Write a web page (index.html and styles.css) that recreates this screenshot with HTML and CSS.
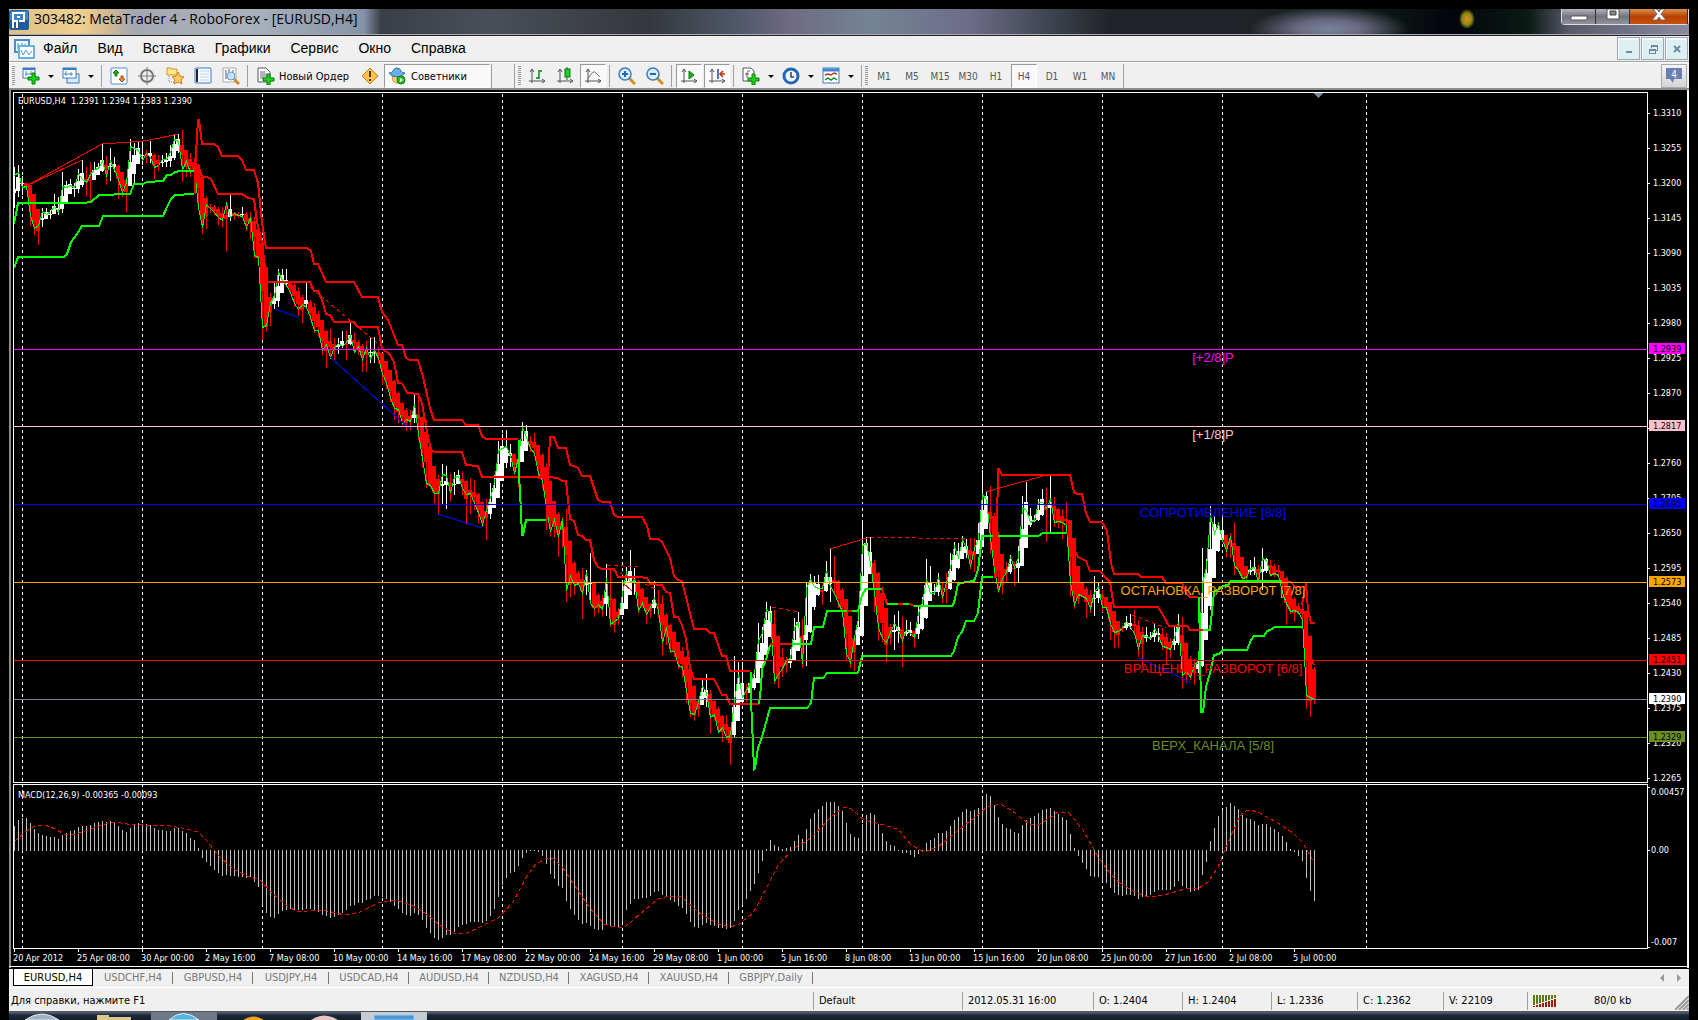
FILE: index.html
```html
<!DOCTYPE html>
<html lang="ru">
<head>
<meta charset="utf-8">
<title>303482: MetaTrader 4 - RoboForex - [EURUSD,H4]</title>
<link rel="stylesheet" href="styles.css">
</head>
<body>
<div class="app">
  <header class="titlebar">
    <svg class="logo" width="20" height="20" viewBox="0 0 20 20"><rect width="20" height="20" rx="2" fill="#1d5f9e"/><rect x="1" y="1" width="18" height="9" fill="#3f86c4"/><path d="M4 18V3h11v8h-5M4 11h4v7M8 7h3" fill="none" stroke="#fff" stroke-width="2"/></svg>
    <h1>303482: MetaTrader 4 - RoboForex - [EURUSD,H4]</h1>
    <div class="caption">
      <button class="cap min" aria-label="Свернуть"><svg width="18" height="14"><rect x="1" y="7" width="16" height="4" rx="1" fill="#fff" stroke="#555"/></svg></button>
      <button class="cap max" aria-label="Развернуть"><svg width="16" height="14"><path d="M2 0h12v10H2z" fill="#fff" stroke="#555"/><path d="M5 2h6v4H5z" fill="#888" stroke="#444"/></svg></button>
      <button class="cap close" aria-label="Закрыть"><svg width="18" height="14"><path d="M2 11L7 5 3 0h4l2 3 2-3h4l-4 5 5 6h-5L9 8l-2 3z" fill="#fff" stroke="#666"/></svg></button>
    </div>
  </header>

  <nav class="menubar">
    <svg class="menu-icon" width="21" height="20" viewBox="0 0 21 20"><rect x="1" y="1" width="14" height="12" fill="#eaf5ff" stroke="#4a90c4" stroke-width="2"/><path d="M4 4v6M8 4v4M11 5v4" stroke="#4a90c4"/><rect x="5" y="7" width="15" height="12" fill="#fff" stroke="#6ab0e0" stroke-width="2"/><path d="M7 11l2 5 3-5 3 5 3-4" fill="none" stroke="#5a98c8"/></svg>
    <button>Файл</button><button>Вид</button><button>Вставка</button><button>Графики</button><button>Сервис</button><button>Окно</button><button>Справка</button>
    <div class="mdi">
      <button aria-label="Свернуть окно"><svg width="12" height="12"><path d="M3 9h6" stroke="#6f8aa0" stroke-width="2"/></svg></button>
      <button aria-label="Восстановить окно"><svg width="12" height="12" shape-rendering="crispEdges"><path d="M4 5V2h6v5H8M4 3h6M2 6h6v4H2zM2 7h6" fill="none" stroke="#6f8aa0"/></svg></button>
      <button aria-label="Закрыть окно"><svg width="12" height="12"><path d="M3 3l6 6M9 3l-6 6" stroke="#6f8aa0" stroke-width="2"/></svg></button>
    </div>
  </nav>

  <div class="toolbar">
    <i class="grip"></i>
    <button class="tb" aria-label="Новый график"><svg viewBox="0 0 18 18"><rect x="1" y="1" width="12" height="10" fill="#fff" stroke="#3a7cc0"/><path d="M1 2h12" stroke="#3a7cc0" stroke-width="2"/><path d="M4 4v5M9 4v4M3 7h8" stroke="#4a88bb"/><path d="M10 6h3v4h4v3h-4v4h-3v-4H6v-3h4z" fill="#1fd21f" stroke="#087a08"/></svg></button>
    <button class="drop" aria-label="Список графиков"></button>
    <button class="tb" aria-label="Профили"><svg viewBox="0 0 18 18"><rect x="5" y="7" width="12" height="9" fill="#d8eaff" stroke="#3a7cc0"/><rect x="1" y="1" width="13" height="10" fill="#fff" stroke="#3a7cc0"/><path d="M1 2h13" stroke="#3a7cc0" stroke-width="2"/><path d="M4 4v5M2 7h9M9 5v4" stroke="#4a88bb"/></svg></button>
    <button class="drop" aria-label="Список профилей"></button>
    <i class="sep before"></i>
    <button class="tb" aria-label="Обзор рынка"><svg viewBox="0 0 18 18"><rect x="1" y="1" width="16" height="16" rx="1" fill="#fff" stroke="#4a94d0"/><path d="M6 3l3 3H7v3H5V6H3z" fill="#1fae1f" stroke="#087a08"/><path d="M12 15l-3-3h2V9h2v3h2z" fill="#f0a040" stroke="#b04010"/></svg></button>
    <button class="tb" aria-label="Окно данных"><svg viewBox="0 0 18 18"><circle cx="9" cy="9" r="6" fill="none" stroke="#777" stroke-width="2"/><path d="M9 0v18M0 9h18" stroke="#777"/></svg></button>
    <button class="tb" aria-label="Навигатор"><svg viewBox="0 0 18 18"><path d="M1 1h4l1 1h5v6H1z" fill="#ffe48a" stroke="#c99a28"/><path d="M3 9v6h5" fill="none" stroke="#888" stroke-dasharray="1 1"/><path d="M12 5l2 4 4 1-3 3 1 4-4-2-4 2 1-4-3-3 4-1z" fill="#ffc860" stroke="#c8801c"/></svg></button>
    <button class="tb" aria-label="Терминал"><svg viewBox="0 0 18 18"><rect x="1" y="1" width="16" height="15" rx="1" fill="#f4faff" stroke="#3a7cc0"/><path d="M3 2v13" stroke="#223" stroke-width="2"/><path d="M6 4h9M6 7h9M6 10h9M6 13h9" stroke="#c4d4e4"/></svg></button>
    <button class="tb" aria-label="Тестер стратегий"><svg viewBox="0 0 18 18"><path d="M1 1h13v14H1z" fill="#fff" stroke="#aaa"/><path d="M4 3v9M7 2v6M11 3v5" stroke="#557"/><circle cx="9" cy="9" r="4" fill="#bfe2ff" stroke="#6a9cc8"/><path d="M12 12l5 5" stroke="#d08a28" stroke-width="3"/></svg></button>
    <i class="sep"></i>
    <button class="order"><svg viewBox="0 0 18 18"><path d="M1 1h8l4 4v10H1z" fill="#fff" stroke="#556"/><path d="M3 5h5M3 7h7M3 9h7M3 11h5" stroke="#667"/><path d="M10 7h3v4h4v3h-4v4h-3v-4H6v-3h4z" fill="#1fd21f" stroke="#087a08"/></svg><span>Новый Ордер</span></button>
    <button class="tb" aria-label="Редактор"><svg viewBox="0 0 18 18"><path d="M9 1l8 8-8 8-8-8z" fill="#ffc24a" stroke="#c0801c"/><path d="M9 4v6M9 12v2" stroke="#5a3200" stroke-width="2"/></svg></button>
    <button class="experts"><svg viewBox="0 0 18 18"><path d="M4 8h10l-1 6q-4 4-8 0z" fill="#f4d27a" stroke="#c79a3a"/><path d="M1 6q3 0 4-2 1-3 4-3t4 3q1 2 4 2-3 4-8 4T1 6z" fill="#6ab0e4" stroke="#2a70b0"/><circle cx="13" cy="13" r="4" fill="#2cc22c" stroke="#087a08"/><path d="M12 11l3 2-3 2z" fill="#fff"/></svg><span>Советники</span></button>
    <i class="sep end"></i>
    <i class="sep gap"></i>
    <i class="grip"></i>
    <button class="tb" aria-label="Бары"><svg viewBox="0 0 18 18"><path d="M4 2v14M1 14h16M2 5l2-3 2 3M14 12l3 2-3 2" fill="none" stroke="#555"/><path d="M8 11h3M11 3v9M11 4h3" fill="none" stroke="#0a8a1a" stroke-width="1.5"/></svg></button>
    <button class="tb" aria-label="Свечи"><svg viewBox="0 0 18 18"><path d="M4 2v14M1 14h16M2 5l2-3 2 3M14 12l3 2-3 2" fill="none" stroke="#555"/><path d="M11 0v13" stroke="#087a08"/><rect x="9" y="2" width="5" height="8" fill="#22cc33" stroke="#087a08"/></svg></button>
    <button class="tb on" aria-label="Линия"><svg viewBox="0 0 18 18"><path d="M4 2v14M1 14h16M2 5l2-3 2 3M14 12l3 2-3 2" fill="none" stroke="#555"/><path d="M4 12Q9 2 12 6l4 4" fill="none" stroke="#4c8a4c"/></svg></button>
    <i class="sep"></i>
    <button class="tb" aria-label="Приблизить"><svg viewBox="0 0 18 18"><path d="M11 11l6 6" stroke="#d8901c" stroke-width="3"/><circle cx="7" cy="7" r="6" fill="#d8efff" stroke="#3a7cc0" stroke-width="1.5"/><path d="M4 7h6M7 4v6" stroke="#2a66aa" stroke-width="2"/></svg></button>
    <button class="tb" aria-label="Отдалить"><svg viewBox="0 0 18 18"><path d="M11 11l6 6" stroke="#d8901c" stroke-width="3"/><circle cx="7" cy="7" r="6" fill="#d8efff" stroke="#3a7cc0" stroke-width="1.5"/><path d="M4 7h6" stroke="#2a66aa" stroke-width="2"/></svg></button>
    <i class="sep"></i>
    <button class="tb on" aria-label="Автопрокрутка"><svg viewBox="0 0 18 18"><path d="M4 2v14M1 14h16M2 5l2-3 2 3M14 12l3 2-3 2" fill="none" stroke="#555"/><path d="M9 4l5 4-5 4z" fill="#1fae2f" stroke="#087a08"/></svg></button>
    <button class="tb on" aria-label="Сдвиг графика"><svg viewBox="0 0 18 18"><path d="M4 2v14M1 14h16M2 5l2-3 2 3M14 12l3 2-3 2" fill="none" stroke="#555"/><path d="M10 2v10" stroke="#1a4aa8" stroke-width="1.5"/><path d="M17 7h-4M15 4l-3 3 3 3" fill="none" stroke="#c03010" stroke-width="1.5"/></svg></button>
    <i class="sep"></i>
    <button class="tb" aria-label="Индикаторы"><svg viewBox="0 0 18 18"><path d="M1 1h8l3 3v10H1z" fill="#fff" stroke="#556"/><path d="M8 4Q5 3 5 7v4M3 7h4" fill="none" stroke="#556"/><path d="M10 7h3v4h4v3h-4v4h-3v-4H6v-3h4z" fill="#1fd21f" stroke="#087a08"/></svg></button>
    <button class="drop" aria-label="Список индикаторов"></button>
    <button class="tb" aria-label="Периоды"><svg viewBox="0 0 18 18"><circle cx="9" cy="9" r="7" fill="#eef6ff" stroke="#2468b4" stroke-width="3"/><path d="M9 5v5h3" fill="none" stroke="#345" stroke-width="1.5"/></svg></button>
    <button class="drop" aria-label="Список периодов"></button>
    <button class="tb" aria-label="Шаблоны"><svg viewBox="0 0 18 18"><rect x="1" y="1" width="16" height="15" fill="#fff" stroke="#3a7cc0"/><path d="M1 3h16" stroke="#3a88d0" stroke-width="3"/><path d="M3 8l3-1 3 1 3-2 3 1" fill="none" stroke="#b03020" stroke-width="1.5"/><path d="M3 13l3-2 3 2 3-2 3 2" fill="none" stroke="#1a8a2a" stroke-width="1.5"/></svg></button>
    <button class="drop" aria-label="Список шаблонов"></button>
    <i class="sep last"></i>
    <i class="grip"></i>
    <button class="tf">M1</button><button class="tf">M5</button><button class="tf">M15</button><button class="tf">M30</button><button class="tf">H1</button><button class="tf on">H4</button><button class="tf">D1</button><button class="tf">W1</button><button class="tf">MN</button>
    <i class="sep end"></i>
    <button class="chat" aria-label="Сообщения: 4"><svg width="18" height="18" viewBox="0 0 18 18"><path d="M1 1h16v11H9l-1 4-3-4H1z" fill="#6a80b4"/><text x="9" y="11" text-anchor="middle">4</text></svg></button>
  </div>

  <main>
    <svg id="chart" class="chart" viewBox="9 90 1680 878" role="img" aria-label="EURUSD,H4"></svg>
  </main>

  <nav class="tabs">
    <button class="active">EURUSD,H4</button><button>USDCHF,H4</button><button>GBPUSD,H4</button><button class="narrow">USDJPY,H4</button><button>USDCAD,H4</button><button>AUDUSD,H4</button><button>NZDUSD,H4</button><button>XAGUSD,H4</button><button>XAUUSD,H4</button><button class="wide">GBPJPY,Daily</button>
    <span class="arrows"><button aria-label="Влево"><svg width="6" height="8"><path d="M5 0v8L1 4z" fill="#999"/></svg></button><button aria-label="Вправо"><svg width="6" height="8"><path d="M1 0v8l4-4z" fill="#999"/></svg></button></span>
  </nav>

  <footer class="status">
    <span class="help">Для справки, нажмите F1</span>
    <span class="s150">Default</span><span class="s131">2012.05.31 16:00</span><span class="s88">O: 1.2404</span><span class="s88">H: 1.2404</span><span class="s86">L: 1.2336</span><span class="s86">C: 1.2362</span><span class="s84">V: 22109</span>
    <span class="net"><svg id="net" width="24" height="12"></svg><b>80/0 kb</b><svg class="size" width="14" height="16"><path d="M0 16L14 2M4 16L14 6M8 16l6-6M12 16l2-2" stroke="#999" stroke-width="2"/></svg></span>
  </footer>
</div>
<footer class="taskbar">
  <svg width="440" height="8"><rect x="142" width="66" height="8" fill="#70798a"/><rect x="352" width="66" height="8" fill="#c6ccd4"/><path d="M16 8q17-12 34 0z" fill="#9fb2c4" stroke="#e4eaf0"/><path d="M88 3h12v2h22v3H88z" fill="#dcc88c"/><path d="M160 8q14-13 30 0z" fill="#55b4e0" stroke="#dff4ff"/><path d="M234 8q10-7 21 0z" fill="#f0a818"/><path d="M302 8q13-9 27 0z" fill="#e8c4c0"/><path d="M365 8V3h40v5z" fill="#4f94d4" stroke="#9cd0ff"/></svg>
</footer>
<script src="script.js"></script>
</body>
</html>
```
FILE: styles.css
```css
* { box-sizing: border-box; }
body {
  margin: 0;
  padding: 9px 9px 0;
  min-height: 100vh;
  background: #000;
  font-family: "DejaVu Sans Condensed", "Noto Sans", sans-serif;
  font-size: 11px;
  overflow: hidden;
}
button {
  font: inherit;
  color: inherit;
  background: none;
  border: 0;
  padding: 0;
  margin: 0;
}
svg { display: block; flex: none; }

.titlebar {
  display: flex;
  height: 27px;
  border-bottom: 1px solid #222;
  box-shadow: inset 0 -1px #a8a8b0;
  background:
    radial-gradient(ellipse 8px 10px at 1458px 10px, #e08a30, #8a8a10 60%, transparent),
    radial-gradient(ellipse 80px 22px at 1320px 20px, #75859a, #6a6880 40%, transparent),
    linear-gradient(90deg, #d9c08c 0, #f0d090 70px, #d0b890 100px, #a4a8b2 125px, #aab2bc 240px, #8494a8 355px, #3a3e46 372px, #4a4e58 480px, #34383c 640px, #50586a 730px, #6e6a82 780px, #748494 860px, #6e6c88 960px, #3e4450 1040px, #202428 1100px, #202428 1230px, #0c1a16 1370px, #04040c 1440px, #0a1a14 1520px, #5a5a6c 1560px, #8a8aa0 1680px);
}
.logo { margin: 1px 5px 0 0; }
h1 {
  margin: 0;
  font: 14px/19px "Open Sans", "Noto Sans", sans-serif;
  color: #000;
  white-space: nowrap;
}
.caption { display: flex; margin-left: auto; height: 16px; border: 1px solid #ddd; border-top: 0; border-radius: 0 0 4px 4px; }
.cap { width: 34px; display: flex; justify-content: center; background: linear-gradient(#b4b4bc, #74747e 50%, #92929c); border-right: 1px solid #333; }
.cap.close { width: 58px; background: linear-gradient(#e09050, #b84000 50%, #c85010); }

.menubar {
  display: flex;
  align-items: center;
  height: 26px;
  padding-left: 5px;
  background: #f0f0f0;
  border-bottom: 1px solid #a0a0a0;
  font: 14px/20px "Liberation Sans", Arial, sans-serif;
  color: #000;
}
.menu-icon { margin-right: -2px; }
.menubar > button { padding: 0 10px 2px; }
.mdi { display: flex; gap: 1px; margin-left: auto; padding-right: 1px; }
.mdi button {
  width: 23px;
  height: 23px;
  display: flex;
  align-items: center;
  justify-content: center;
  border: 1px solid #9aa8b8;
  background: #dcf0f2;
  box-shadow: inset 1px 2px #f6fafc;
}

.toolbar {
  display: flex;
  align-items: center;
  height: 28px;
  padding: 1px 0 0 3px;
  background: #f0f0f0;
  border-top: 1px solid #fff;
  border-bottom: 2px solid #8c8c8c;
}
.grip { width: 3px; height: 20px; margin-right: 2px; background: repeating-linear-gradient(#999 0 1px, #f0f0f0 1px 2px); }
.tb { width: 28px; height: 24px; display: flex; align-items: center; justify-content: center; flex: none; }
.toolbar .tb svg, .order svg, .experts svg { width: 18px; height: 18px; }
.on, .experts {
  border: 1px solid #999;
  border-right-color: #fff;
  border-bottom-color: #fff;
  background: #f9f9f9;
}
.tb.on { width: 26px; margin: 0 1px; }
.drop { width: 12px; height: 24px; display: flex; align-items: center; justify-content: center; flex: none; }
.drop::before { content: ""; border: 3px solid transparent; border-top-color: #000; border-bottom: 0; }
.sep { width: 1px; height: 22px; margin: 0 3px 0 2px; background: #a0a0a0; }
.sep.before { margin-left: 4px; }
.sep.end { height: 25px; margin: 0 1px; }
.sep.gap { height: 25px; margin-left: 21px; margin-right: 3px; }
.sep.last { margin-left: 4px; }
.order { display: flex; align-items: center; gap: 4px; height: 24px; padding: 0 3px 0 6px; width: 105px; white-space: nowrap; }
.experts { display: flex; align-items: center; gap: 5px; width: 106px; height: 24px; padding-left: 3px; }
.tf { width: 28px; height: 24px; color: #555; font-size: 10px; flex: none; }
.tf.on { width: 26px; margin: 0 1px; }
.chat { width: 26px; height: 24px; margin-left: auto; margin-right: 2px; display: flex; align-items: center; justify-content: center; border: 1px solid #aaa; background: linear-gradient(#f4f4f4, #d4d4d4); }
.chat text { fill: #fff; font-size: 10px; }

.chart { width: 100%; height: auto; background: #000; }
.chart text { font-size: 9px; fill: #fff; }
.chart .level { font: 13px "Liberation Sans", Arial, sans-serif; text-anchor: middle; }
.chart .dark { fill: #000; }
.grid { stroke: #fff; stroke-dasharray: 3 3; }
.frame { fill: none; stroke: #fff; }
.trend { fill: none; stroke-width: 2; }
.thin { fill: none; stroke-width: 1; }
.dashed { stroke-dasharray: 4 3; }

.tabs {
  display: flex;
  height: 20px;
  padding-left: 4px;
  background: #f0f0f0;
  border-top: 1px solid #000;
  border-bottom: 1px solid #fff;
  color: #777;
  font-size: 11px;
}
.tabs > button { position: relative; width: 80px; height: 17px; }
.tabs > button::after { content: ""; position: absolute; right: 0; top: 3px; width: 1px; height: 12px; background: #777; }
.tabs > .active { background: #fff; color: #000; border: 1px solid #000; border-top: 0; }
.tabs > .active::after { display: none; }
.tabs > .narrow { width: 76px; }
.tabs > .wide { width: 84px; }
.arrows { display: flex; gap: 11px; margin-left: auto; padding-right: 7px; align-items: center; }

.status {
  display: flex;
  align-items: center;
  height: 24px;
  padding-top: 2px;
  background: #f0f0f0;
  border-bottom: 1px solid #555;
  font-size: 11px;
  color: #000;
  white-space: nowrap;
}
.status > span { height: 18px; line-height: 18px; padding-left: 5px; border-left: 1px solid #a0a0a0; flex: none; }
.status > .help { flex: 1; padding-left: 2px; border: 0; }
.s150 { width: 149px; }
.s131 { width: 131px; }
.s88 { width: 89px; }
.s86 { width: 86px; }
.s84 { width: 84px; }
.status .net { display: flex; align-items: center; width: 162px; }
.net b { font-weight: normal; margin-left: 37px; }
.size { margin-left: auto; align-self: flex-end; }

.taskbar { height: 8px; background: linear-gradient(#5a6878, #1c2a3c 3px, #141c26); overflow: hidden; }
```
FILE: script.js
```js
const chart = document.getElementById('chart');
let out = '';
const add = (s) => { out += s; };
const rect = (x, y, w, h, c) => add(`<rect x="${x}" y="${y}" width="${w}" height="${h}" fill="${c}"/>`);
const barX = (n) => 14 + 4 * n;

// high, low, close of each bar, three units to the pixel, measured down from y0
const ohlc = [
  [0, 100, '202,325,225 196,290,216 228,285,262 255,270,258 255,378,345 285,405,383 340,435,375 323,380,333 325,358,342 330,357,333 282,340,318 292,345,335 215,340,257 243,305,260 237,265,255 250,290,262 207,280,218 181,260,237 202,288,246 186,305,222 186,240,206 190,220,204 130,215,182 168,255,224 143,242,182 170,215,206 196,298,238 220,290,276 240,335,245 117,250,138 130,248,145 125,180,150 135,195,180 150,188,158 123,190,170 160,237,200 165,212,196 165,200,178 160,200,178 135,200,155 103,180,118 103,160,122 90,245,207 150,232,182 160,230,215 175,230,205 193,325,322 232,402,382 288,387,313 312,340,325 315,345,335 320,375,352 320,382,360 305,453,310 283,362,352 335,360,340 337,355,345 320,355,347 335,392,382 337,417,350 350,475,465 378,490,470 420,720,680 530,693,675 580,678,610 550,628,585 507,620,517 507,575,540 507,555,555 545,580,575 545,620,610 562,648,628 585,668,612 548,620,622 600,660,650 610,700,690 632,708,690 660,765,750 690,803,732 687,775,770 715,780,740 713,762,728 692,745,738 692,780,725 668,735,705 700,760,755 720,765,738 732,815,778 722,815,745 713,788,775 710,788,750 740,790,775 760,855,820 795,866,850 810,905,890 840,960,925 872,968,928 905,975,970 925,992,958 930,990,962 885,970,912'],
  [101, 380, '52,180,160 110,262,235 120,325,308 210,320,315 260,368,340 285,402,338 252,372,282 258,388,284 282,365,335 277,345,290 270,312,288 272,345,325 300,430,342 295,402,338 300,390,370 340,430,395 362,442,432 358,480,390 308,417,350 285,385,310 183,310,210 162,290,205 150,265,197 192,260,225 220,285,280 180,322,230 126,245,142 135,212,170 168,215,205 160,230,220 195,298,280 220,325,300 250,450,385 300,472,452 365,470,418 395,530,468 410,503,418 387,665,630 480,650,588 543,645,615 572,615,610 565,718,640 570,645,575 519,670,668 610,710,685 638,700,673 645,712,688 552,708,595 568,742,733 655,758,722 685,735,713 610,705,640 560,660,575 510,630,605 563,645,600 600,700,690 625,680,670 655,732,702 670,715,680 602,702,655 630,715,690 645,825,785 700,795,742 730,818,812 752,832,812 785,866,855 800,895,860 828,968,930 865,1012,1000 915,1022,1003 958,1012,965 897,972,918 882,980,935 930,1062,1012 958,1020,1003 980,1060,1055 1005,1085,1040 1005,1080,1072 1040,1155,1065 828,1070,960 845,1020,882 845,970,952 912,965,930'],
  [184, 460, '635,690,665 640,690,640 488,668,540 500,640,520 426,590,448 438,530,460 450,672,663 525,683,643 563,650,625 590,640,600 567,625,595 475,600,500 455,570,487 473,623,610 370,618,385 342,520,358 348,450,378 345,408,385 375,435,383 303,395,333 267,426,378 288,400,398 360,445,430 385,455,452 420,602,580 470,625,605 528,633,532 460,552,475 186,530,255 232,385,250 230,318,310 300,455,395 335,542,500 380,545,535 460,605,545 492,555,515 465,570,488 452,548,510 470,620,540 480,528,508 485,528,518 515,560,530 440,536,460 410,510,425 297,478,357 318,405,400 372,405,398 340,407,350 365,430,412 340,430,365 280,390,320 245,362,258 250,328,290 228,290,240 237,295,260 235,328,318 235,335,265 190,282,235 30,262,103 95,180,118 78,282,232 160,355,330 215,400,392 285,402,355 305,368,335 285,342,292 305,378,322 258,368,292 107,318,142 65,265,150 145,200,187 165,186,180 118,182,125 87,168,125 80,245,145 45,217,118 112,200,187 145,205,182 148,237,187 125,220,195 180,408,365 235,448,432 320,432,402 365,410,407 380,473,415 390,460,443 347,468,395 367,430,377 390,455,440 410,450,442 425,540,490 452,563,515 485,560,512 495,517,503 468,510,482 462,507,500 450,525,520 480,592,563 500,620,525 502,545,528 515,540,535 492,545,503 505,545,525 505,570,558 520,612,560 535,595,568 500,570,530 462,555,485 470,687,645 545,670,632 588,660,650 598,675,615 590,640,600 265,620,370 298,540,320 137,450,165 168,355,220 185,275,190 172,245,240 225,290,270 220,295,228 186,345,315 258,335,330 298,362,355 320,362,350 300,345,325 290,345,322 315,370,365 265,390,293 293,340,300 300,350,345 312,350,338 315,350,345 340,400,395 350,495,430 385,462,453 412,487,450 430,458,457 430,485,478 453,748,705 526,770,712 622,732,718']
];

// vertical day separators
[22, 142, 262, 382, 502, 622, 742, 862, 982, 1102, 1222, 1366].forEach((x) => {
  add(`<path class="grid" d="M${x + 0.5} 94V948"/>`);
});

// Heikin-Ashi candles from the bars
const bars = [];
ohlc.forEach(([, y0, list]) => list.split(' ').forEach((b) => bars.push(b.split(',').map((v) => y0 + v / 3))));
let ho = 206;
let hc = 180;
let prev = 205;
bars.forEach(([h, l, c], n) => {
  const o = (ho + hc) / 2;
  // a shadow that ends at the body's edge carries no extreme of its own
  const high = h > o - 3 ? Math.min(prev, c) : h;
  const low = l < o + 3 ? Math.max(prev, c) : l;
  const k = (prev + high + low + c) / 4;
  const col = k < o ? '#fff' : '#f00';
  const top = Math.round(Math.min(o, k));
  const bot = Math.round(Math.max(o, k));
  const hi = Math.round(Math.min(h, top));
  rect(barX(n), hi, 1, Math.round(Math.max(l, bot)) - hi, col);
  rect(barX(n) - (n ? 2 : 0), top, n ? 4 : 2, Math.max(1, bot - top), col);
  ho = o; hc = k; prev = c;
});
add(`<polyline class="thin" stroke="#0f0" points="${bars.map((b, n) => `${barX(n) + 0.5},${Math.round(b[2]) + 0.5}`).join(' ')}"/>`);

// indicator lines: x0, y0, units per pixel across, then colour and points
const G = '#0f0';
const R = '#f00';
const B = '#00f';
const line = (x0, y0, sx, items, extra) => items.forEach(([c, pts, dash]) => {
  const p = pts.split(' ').map((q) => { const [x, y] = q.split(','); return `${Math.round(x0 + x / sx)},${Math.round(y0 + y / 3)}`; }).join(' ');
  add(`<polyline class="${extra}${dash ? ' dashed' : ''}" stroke="${c}" points="${p}"/>`);
});
line(0, 100, 3, [
  [G, '42,373 54,309 250,309 273,305 296,285 390,282 402,253 430,251 442,245 490,242 500,226 512,224 524,216 540,213 583,212'],
  [G, '42,505 54,470 192,470 200,462 212,425 224,410 247,378 296,378 308,348 490,348 502,322 512,296 524,285 583,282'],
  [R, '585,282 585,212 593,60 597,60 606,131 643,131 655,142 665,168 715,168 727,180 739,210 763,210 775,250 787,370 799,443 920,443 932,452 942,492 955,492 978,546 1063,546 1087,590 1135,590 1147,637 1165,660 1195,735 1207,735 1219,775 1231,780 1255,780 1268,830 1290,925 1302,960 1387,960 1399,974 1435,974 1447,1008 1458,1017 1555,1017'],
  [R, '585,190 597,205 606,230 620,232 632,237 655,282 727,282 745,295 763,296 772,365 787,430 800,546 930,546 942,572 955,572 967,600 978,642 990,645 1002,666 1063,666 1075,680 1135,680 1147,748 1160,755 1171,765 1183,785 1195,848 1207,848']
], 'trend');
line(400, 380, 3, [
  [R, '7,8 20,38 55,42 67,70 80,155 92,210 103,216 187,216 199,254 235,258 247,290 440,291 475,294 487,302 499,302 511,418 523,424 535,466 547,468 559,480 571,480 583,540 595,560 607,566 643,567 653,590 715,591 740,595 750,613 787,615 799,637 811,640 823,710 835,712 847,735 859,778 871,865 883,897 943,897 967,944 979,946 991,972 1076,972'],
  [G, '357,180 357,290 361,330 365,466 370,466 378,420 437,420'],
  [R, '440,420 445,290 450,172 463,170 475,204 499,204 511,254 523,257 535,264 547,288 571,288 595,360 607,366 631,366 643,405 655,411 727,411 740,437 750,477 775,477 787,487 811,535 823,587 835,600 847,604 859,650 883,747 919,747 931,758 943,760 967,828 979,828 991,873 1051,873'],
  [G, '1052,876 1054,960 1058,1095 1062,1168 1066,1165 1075,1105 1087,1072 1111,984 1222,984 1232,970 1243,895 1270,893 1282,879 1375,878'],
  [G, '1076,972 1082,920 1087,868 1099,840 1111,795'],
  [R, '1111,792 1175,792'],
  [G, '1175,792 1232,792 1243,741 1268,741 1280,693 1335,693']
], 'trend');
line(720, 460, 3, [
  [G, '415,638 427,588 693,588 703,572 715,532 727,515 739,484 763,482 775,458 787,352 820,350'],
  [G, '375,453 415,453 427,405 439,387 487,387'], [R, '380,453 395,453'],
  [R, '487,387 500,432 570,432 583,438'], [G, '502,432 535,432'], [G, '550,432 568,432'],
  [G, '583,438 697,438 703,430 715,372 739,365 763,362 775,330 787,228 955,228 970,219 1040,219'], [R, '820,228 832,228'],
  [R, '828,350 832,200 834,28 838,28 845,45 1050,45 1062,95 1072,102 1087,102 1099,160 1111,186 1147,186'],
  [R, '1040,219 1060,265 1075,292 1099,302 1111,333 1140,333']
], 'trend');
line(1100, 460, 2.622, [
  [R, '0,186 6,186 18,212 28,310 37,342 100,342 108,351 163,351 174,368 215,370 225,400 237,411 258,411'],
  [G, '260,411 263,560 266,755 270,755 277,682 288,640 298,585 312,581 322,570 385,570 395,540 405,528 430,527 437,513 447,511 459,501 530,501'],
  [R, '0,333 15,355 27,365 36,440 153,440 165,465 182,497 227,498 236,510 270,510'],
  [G, '270,510 288,510 299,395 312,388 322,378 335,375 343,362 478,362'],
  [R, '478,362 500,365 510,380 540,380'], [R, '530,435 541,370 546,450 552,489 564,489'], [R, '541,510 545,600 555,600 562,615']
], 'trend');
line(0, 100, 3, [[R, '79,257 307,131 390,125 430,122 480,113 535,103'], [R, '79,257 247,181'], [B, '825,628 895,650'], [B, '991,772 1231,987'], [R, '931,560 1145,740', 1]], 'thin');
line(400, 380, 3, [[B, '115,403 247,445'], [R, '620,555 715,562', 1], [R, '640,570 775,630', 1], [R, '670,610 695,632'], [R, '1115,680 1197,695', 1]], 'thin');
line(720, 460, 3, [[R, '331,267 451,230'], [R, '451,230 740,236', 1], [R, '799,97 850,82 980,45'], [R, '1235,465 1338,505', 1]], 'thin');
line(1100, 460, 2.622, [[B, '103,593 237,665']], 'thin');

// MACD histogram, y units as above from 770
const macd = '167 150 145 145 160 177 190 195 198 200 200 207 195 188 183 180 172 168 168 165 159 156 153 156 153 159 168 180 186 174 165 159 162 162 165 174 180 180 183 183 174 174 183 189 204 210 234 264 276 288 300 309 318 315 318 318 321 320 324 320 336 351 405 429 440 444 432 423 420 417 420 420 420 417 417 420 426 435 438 444 441 435 429 420 408 405 399 399 390 387 378 378 381 387 396 408 417 429 435 438 429 435 450 474 489 503 510 504 495 495 486 470 466 462 456 456 456 459 453 438 417 381 345 324 309 306 288 264 249 243 241 246 258 282 312 327 348 354 393 417 435 450 462 459 468 477 480 480 465 468 471 471 455 420 402 387 387 384 384 378 366 363 375 381 390 396 408 414 432 456 471 474 465 459 465 468 474 474 477 474 453 420 405 387 363 342 309 273 237 210 225 231 237 234 231 213 195 207 177 147 129 117 108 96 96 96 108 123 159 192 201 204 162 135 129 135 162 189 213 225 228 240 249 249 255 261 252 243 219 210 204 189 189 183 168 150 141 126 117 123 120 114 87 72 78 105 141 162 174 177 186 189 165 150 144 138 129 120 117 114 123 132 141 150 192 234 258 279 297 318 321 320 333 339 354 369 375 378 375 375 378 387 381 378 375 366 360 360 360 360 351 333 348 354 366 363 360 315 276 213 174 138 120 111 99 108 117 135 144 147 153 165 162 162 171 177 186 198 216 237 246 258 273 324 363 392'.split(' ');
macd.forEach((v, n) => {
  const y = Math.round(770 + v / 3);
  rect(barX(n), Math.min(y, 850), 1, Math.max(1, y > 850 ? y - 850 : 851 - y), '#c0c0c0');
});
line(0, 770, 2.751, [[R, '40,213 70,185 95,168 125,166 150,178 175,191 210,191 250,178 280,165 315,157 350,161 400,166 450,166 500,175 545,187 570,212 600,255 640,298 680,318 715,330 745,365 790,408 820,427 870,421 900,423 950,434 990,425 1040,398 1090,391 1130,405 1170,428 1210,465 1245,488 1280,492 1320,470 1370,445 1410,395 1450,318 1475,283 1505,264 1525,267 1549,293', 1]], 'thin');
line(560, 770, 2.751, [[R, '8,293 40,348 80,410 120,463 150,472 180,470 220,433 270,388 300,378 335,382 380,425 430,460 465,470 490,465 530,430 570,350 600,285 640,237 690,205 750,135 780,111 800,117 835,150 880,163 930,178 965,225 1000,245 1040,232 1090,185 1140,145 1175,110 1210,102 1240,120 1290,162 1320,162 1350,140 1370,127 1400,128 1440,180 1480,260 1520,320 1540,340', 1]], 'thin');
line(1120, 770, 2.713, [[R, '0,340 40,367 75,380 120,375 175,356 215,355 240,335 265,290 290,225 320,150 335,127 350,121 375,127 430,160 470,190 495,215 515,255 527,280', 1]], 'thin');

// price scale
for (let k = 0; k < 20; k += 1) {
  const y = 113 + 35 * k;
  rect(1648, y, 2, 1, '#fff');
  add(`<text x="1653" y="${y + 3}">${(1.331 - 0.0055 * k).toFixed(4)}</text>`);
}

// Murrey levels and current price
[[349, '1.2939', '#f0f', '[+2/8]P'], [426, '1.2817', '#ffc0cb', '[+1/8]P'], [504, '1.2695', '#00f', 'СОПРОТИВЛЕНИЕ [8/8]'], [582, '1.2573', '#ffa500', 'ОСТАНОВКА_РАЗВОРОТ [7/8]'], [660, '1.2451', '#f00', 'ВРАЩЕНИЕ_РАЗВОРОТ [6/8]'], [737, '1.2329', '#6b8e23', 'ВЕРХ_КАНАЛА [5/8]'], [699, '1.2390', '#fff', '']].forEach(([y, p, c, t]) => {
  rect(14, y, 1634, 1, t ? c : '#778899');
  rect(1649, y - 6, 36, 11, c);
  add(`<text class="dark" x="1653" y="${y + 3}">${p}</text>`);
  if (t) add(`<text class="level" x="1213" y="${y + 13}" style="fill:${c}">${t}</text>`);
});

// frames
add('<path class="frame" d="M13.5 782.5V92.5H1647.5V782.5zM13.5 784.5H1647.5V948.5H13.5z"/>');
rect(9, 90, 2, 878, '#8c8c8c');
rect(1687, 90, 2, 878, '#fff');
rect(9, 966, 1680, 1, '#fff');
add('<path d="M1313 93h10l-5 5z" fill="#778899"/>');
[787, 850, 947].forEach((y) => rect(1648, y, 2, 1, '#fff'));
add('<text x="18" y="104">EURUSD,H4&#160; 1.2391 1.2394 1.2383 1.2390</text><text x="18" y="798">MACD(12,26,9) -0.00365 -0.00093</text>');
add('<text x="1651" y="795">0.00457</text><text x="1651" y="853">0.00</text><text x="1651" y="945">-0.007</text>');
['20 Apr 2012', '25 Apr 08:00', '30 Apr 00:00', '2 May 16:00', '7 May 08:00', '10 May 00:00', '14 May 16:00', '17 May 08:00', '22 May 00:00', '24 May 16:00', '29 May 08:00', '1 Jun 00:00', '5 Jun 16:00', '8 Jun 08:00', '13 Jun 00:00', '15 Jun 16:00', '20 Jun 08:00', '25 Jun 00:00', '27 Jun 16:00', '2 Jul 08:00', '5 Jul 00:00'].forEach((t, i) => {
  rect(14 + 64 * i, 949, 1, 3, '#fff');
  add(`<text x="${13 + 64 * i}" y="961">${t}</text>`);
});
chart.setAttribute('shape-rendering', 'crispEdges');
chart.innerHTML = out;

// connection meter
let net = '';
for (let i = 0; i < 8; i += 1) {
  net += `<rect x="${i * 3}" y="0" width="2" height="${10 - i}" fill="#5a7a10"/><rect x="${i * 3}" y="${11 - i}" width="2" height="${i + 1}" fill="#a01c08"/>`;
}
document.getElementById('net').innerHTML = net;
```
